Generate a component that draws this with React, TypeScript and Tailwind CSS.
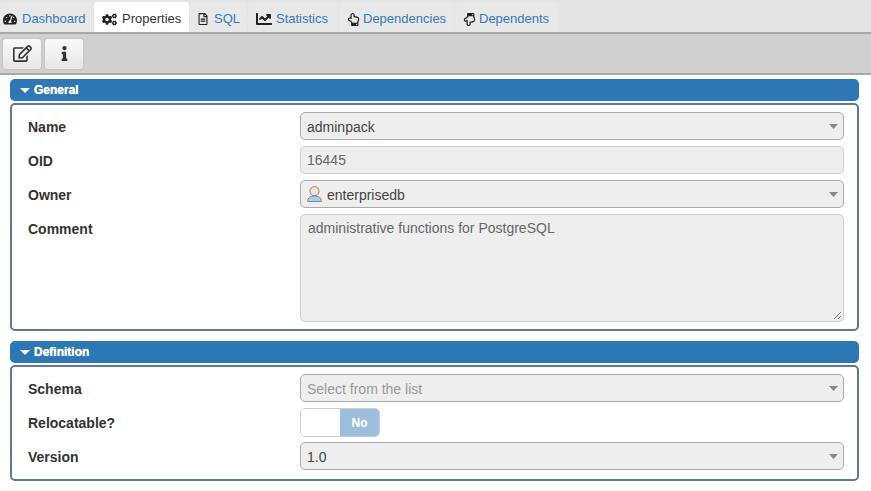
import { FaChartLine, FaCogs, FaInfo, FaRegEdit, FaRegFileAlt, FaRegHandPointDown, FaRegHandPointUp, FaTachometerAlt } from "react-icons/fa";
import type { ReactNode } from "react";

const tabs = [
  { label: "Dashboard", icon: <FaTachometerAlt size={14} />, w: "w-[93px] pl-[3px] gap-[5px]" },
  { label: "Properties", icon: <FaCogs size={15} />, w: "w-[95px] pl-[8px] gap-[5px]", active: true },
  { label: "SQL", icon: <FaRegFileAlt size={12} />, w: "w-[57px] pl-[7px] gap-[5px]" },
  { label: "Statistics", icon: <FaChartLine size={16} />, w: "w-[90px] pl-[8px] gap-[4px]" },
  { label: "Dependencies", icon: <FaRegHandPointUp size={13} />, w: "w-[115px] pl-[8px] gap-[3px]" },
  { label: "Dependents", icon: <FaRegHandPointDown size={13} />, w: "w-[103px] pl-[8px] gap-[3px]" },
];

function SectionHeader({ title }: { title: string }) {
  return (
    <div className="h-[22px] bg-[#2c77b4] rounded-[5px] flex items-center pl-[10px] gap-[4px] text-white text-[12px] font-bold [text-shadow:0_0_1px_#fff]">
      <svg width="10" height="5" viewBox="0 0 10 5"><path d="M0 0h10L5 5z" fill="#fff" /></svg>
      {title}
    </div>
  );
}

function Row({ label, children }: { label: string; children: ReactNode }) {
  return (
    <div className="flex items-start">
      <div className="w-[272px] h-[28px] shrink-0 text-[14px] leading-[30px] font-bold text-[#333]">{label}</div>
      <div className="flex-1">{children}</div>
    </div>
  );
}

function SelectBox({ children, muted }: { children: ReactNode; muted?: boolean }) {
  return (
    <div className={`h-[28px] bg-[#eeeeee] border border-[#aaaaaa] rounded-[5px] flex items-center justify-between pl-[6px] pr-[5px] text-[14px] ${muted ? "text-[#999]" : "text-[#444]"}`}>
      <div className="flex items-center gap-[5px] pt-[2px]">{children}</div>
      <svg width="9" height="5" viewBox="0 0 9 5"><path d="M0 0h9L4.5 5z" fill="#888" /></svg>
    </div>
  );
}

function UserIcon() {
  return (
    <svg width="15" height="16" viewBox="0 0 15 16" className="-mt-[2px]">
      <circle cx="7.5" cy="5.2" r="4.6" fill="#f6e0d6" stroke="#666" strokeWidth="0.7" />
      <path d="M.6 15.5c0-3.8 2.6-5.5 6.9-5.5s6.9 1.7 6.9 5.5z" fill="#a9d0ee" stroke="#666" strokeWidth="0.7" />
    </svg>
  );
}

export default function App() {
  return (
    <div className="w-[871px] h-[491px] bg-white overflow-hidden font-['Liberation_Sans',Arial,sans-serif]">
      <div className="h-[32px] bg-[#e4e4e4] flex items-end pt-[2px]">
        {tabs.map((t) => (
          <div
            key={t.label}
            className={`${t.w} h-[30px] mr-[1px] pt-[4px] rounded-t-[4px] flex items-center text-[13px] ${t.active ? "bg-white text-[#333]" : "bg-[#e8e8e8] text-[#337ab7]"}`}
          >
            <span className="text-[#222]">{t.icon}</span>
            {t.label}
          </div>
        ))}
      </div>
      <div className="h-[43px] bg-[#d0d0d0] border-y-2 border-[#a9a9a9] flex items-center gap-[4px] pl-[3px]">
        <button className="w-[38px] h-[30px] rounded-[3px] bg-gradient-to-b from-[#fafafa] to-[#e6e6e6] shadow-[0_0_2px_#aaa] flex items-center justify-center text-[#333]">
          <FaRegEdit size={19} />
        </button>
        <button className="w-[38px] h-[30px] rounded-[3px] bg-gradient-to-b from-[#fafafa] to-[#e6e6e6] shadow-[0_0_2px_#aaa] flex items-center justify-center text-[#333]">
          <FaInfo size={15} />
        </button>
      </div>
      <div className="pl-[10px] pr-[12px] pt-[4px]">
        <SectionHeader title="General" />
        <div className="mt-[2px] h-[228px] border-2 border-[#5b7a96] rounded-[5px] pl-[16px] pr-[13px] pt-[7px] flex flex-col gap-[6px]">
          <Row label="Name"><SelectBox>adminpack</SelectBox></Row>
          <Row label="OID">
            <div className="h-[28px] bg-[#eeeeee] border border-[#cccccc] rounded-[5px] flex items-center px-[6px] text-[14px] text-[#666]">16445</div>
          </Row>
          <Row label="Owner"><SelectBox><UserIcon />enterprisedb</SelectBox></Row>
          <Row label="Comment">
            <div className="relative h-[108px] bg-[#eeeeee] border border-[#cccccc] rounded-[5px] pl-[7px] pr-[6px] py-[3px] text-[14px] leading-[20px] text-[#666]">
              administrative functions for PostgreSQL
              <svg className="absolute right-[1px] bottom-[1px]" width="9" height="9" viewBox="0 0 9 9">
                <path d="M1 8 8 1M5 8l3-3" stroke="#555" strokeWidth="0.8" />
              </svg>
            </div>
          </Row>
        </div>
        <div className="mt-[10px]"><SectionHeader title="Definition" /></div>
        <div className="mt-[2px] h-[116px] border-2 border-[#5b7a96] rounded-[5px] pl-[16px] pr-[13px] pt-[7px] flex flex-col gap-[6px]">
          <Row label="Schema"><SelectBox muted>Select from the list</SelectBox></Row>
          <Row label="Relocatable?">
            <div className="w-[80px] h-[29px] mb-[-1px] border border-[#ccc] rounded-[5px] flex overflow-hidden">
              <div className="w-[39px] bg-white" />
              <div className="flex-1 bg-[#9dbfdd] text-white text-[12px] font-bold flex items-center justify-center">No</div>
            </div>
          </Row>
          <Row label="Version"><SelectBox>1.0</SelectBox></Row>
        </div>
      </div>
    </div>
  );
}
